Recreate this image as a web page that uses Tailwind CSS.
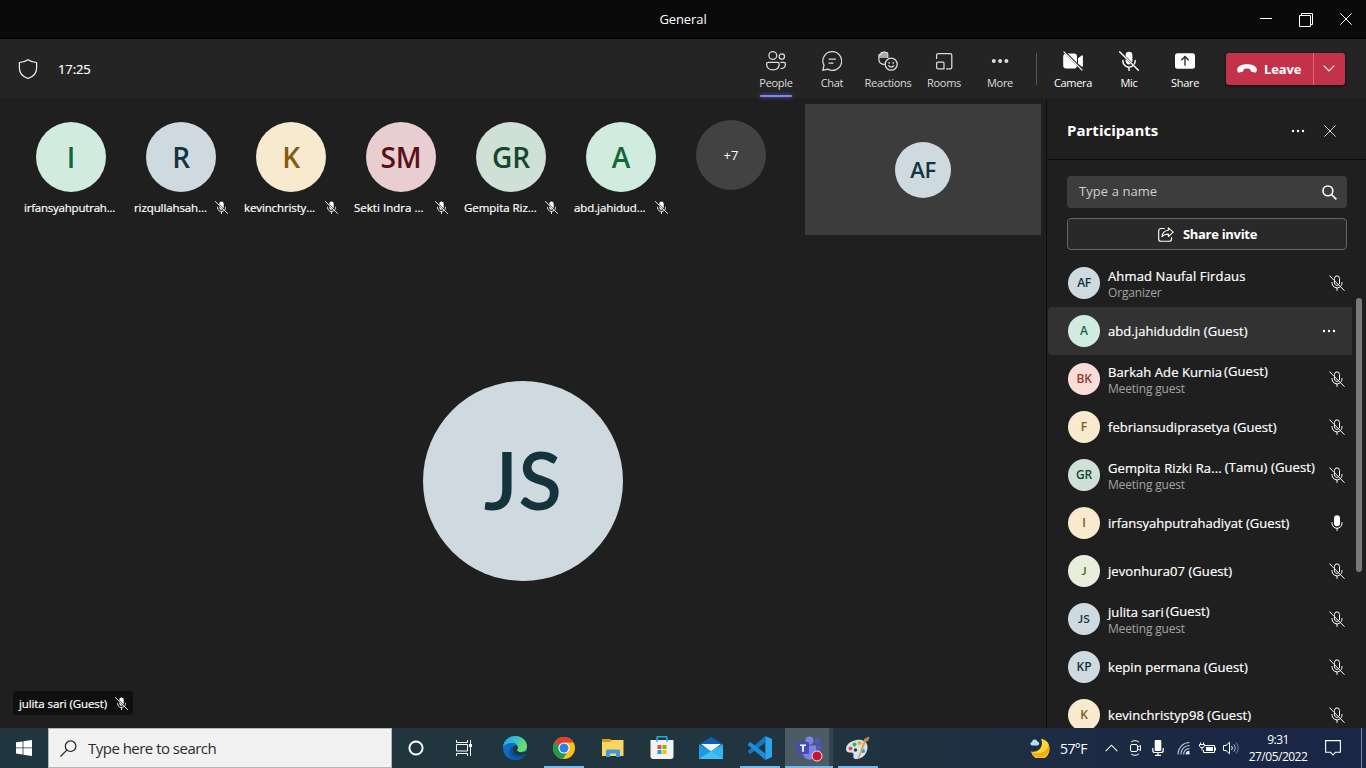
<!DOCTYPE html>
<html lang="en">
<head>
<meta charset="utf-8">
<title>General</title>
<script src="https://cdn.jsdelivr.net/npm/@tailwindcss/browser@4"></script>
</head>
<body class="w-[1366px] h-[768px] overflow-hidden bg-[#1f1f1f] text-white font-['Open_Sans','Noto_Sans',sans-serif]">
<svg class="hidden">
  <symbol id="mic-off" viewBox="0 0 16 16">
    <g fill="none" stroke="currentColor" stroke-linecap="round">
      <path d="M5.5 4.3v-.9a2.5 2.5 0 0 1 5 0v5.1M5.5 5.8v2.1a2.5 2.5 0 0 0 3.900 2.1"/>
      <path d="M3 7.5v.6a5 5 0 0 0 8 3.9M12.3 10.5a5 5 0 0 0 .7-2.4v-.6M8 13v2.4"/>
      <path d="M.6.8l14.6 14.6"/>
    </g>
  </symbol>
  <symbol id="mic-off-fill" viewBox="0 0 20 20">
    <path d="M6.6 4.900V4.200a3.400 3.400 0 0 1 6.800 0v6l-.4 1zM6.600 8l5 5a3.400 3.400 0 0 1-5-3z" fill="currentColor"/>
    <path d="M3.900 9.500v.6a6.100 6.100 0 0 0 9.400 5.100M15.400 13a6 6 0 0 0 .7-2.900v-.6M10 16.400v3.100M.6.8l18.800 18.400" fill="none" stroke="currentColor" stroke-width="1.4" stroke-linecap="round"/>
  </symbol>
  <symbol id="dots" viewBox="0 0 14 4">
    <circle cx="2" cy="2" r="1.2"/><circle cx="7" cy="2" r="1.2"/><circle cx="12" cy="2" r="1.2"/>
  </symbol>
</svg>

<div class="flex flex-col h-full">
  <!-- Title bar -->
  <header class="h-[39px] shrink-0 bg-[#0a0a0a] border-b border-black grid grid-cols-[1fr_auto_1fr] items-center">
    <span></span>
    <span class="text-[13px] tracking-[-0.1px] pt-0.5">General</span>
    <div class="flex justify-end pt-px">
      <div class="w-10 flex justify-center"><svg width="12" height="12" viewBox="0 0 12 12"><path d="M0 5.5h12" stroke="#fff"/></svg></div>
      <div class="w-10 flex justify-center"><svg width="14" height="14" viewBox="0 0 14 14" fill="none" stroke="#fff"><path d="M.5 2.5h11v11h-11zM2.5 2.5v-2h11v11h-2"/></svg></div>
      <div class="w-10 flex justify-center"><svg width="12" height="12" viewBox="0 0 12 12"><path d="M.3.3l11.4 11.4M11.7.3L.3 11.7" stroke="#fff"/></svg></div>
    </div>
  </header>

  <!-- Meeting toolbar -->
  <nav class="h-[60px] shrink-0 bg-[#242424] border-b border-[#1f1f1f] flex items-center pl-[18px] pr-[21px]">
    <svg width="20" height="20" viewBox="0 0 20 20" fill="none" stroke="#f0f0f0" stroke-width="1.2" stroke-linejoin="round"><path d="M10 .7c2.6 1.9 5.3 2.6 8.6 2.8v5.8c0 5-3 8.300-8.600 10.200C4.400 17.600 1.400 14.300 1.400 9.300V3.500C4.700 3.300 7.400 2.600 10 .7z"/></svg>
    <span class="ml-5 pt-0.5 text-[13px] tracking-[-0.1px] w-24 [-webkit-text-stroke:0.2px]">17:25</span>
    <div class="ml-auto flex h-full text-[11px] leading-4 text-[#dcdcdc] tracking-[-0.3px]">
      <div class="w-14 flex flex-col items-center pt-3">
        <svg width="20" height="20" viewBox="0 0 20 20" fill="none" stroke="currentColor" stroke-width="1.25"><circle cx="6.800" cy="4.500" r="3.900"/><circle cx="15.800" cy="5.600" r="2.700"/><path d="M2.300 11.400h9.200c1 0 1.700.7 1.700 1.600 0 3.600-2.400 5.900-6.300 5.900S.6 16.600.6 13c0-.9.700-1.600 1.700-1.600zM14.400 11.400h3.300c1 0 1.700.7 1.700 1.600 0 2.900-1.700 4.700-4.800 4.500"/></svg>
        <span class="mt-1">People</span>
        <i class="mt-1 w-8 h-0.5 rounded bg-[#7f85f5] shadow-[0_0_4px_#5b5fc7]"></i>
      </div>
      <div class="w-14 flex flex-col items-center pt-3">
        <svg width="20" height="20" viewBox="0 0 20 20" fill="none" stroke="currentColor" stroke-width="1.25" stroke-linecap="round" stroke-linejoin="round"><path d="M10.300.7a9.300 9.300 0 1 1-4.500 17.400L.8 19.300l1.200-4.900A9.300 9.300 0 0 1 10.300.7zM7 8h6.500M7 12h4"/></svg>
        <span class="mt-1">Chat</span>
      </div>
      <div class="w-14 flex flex-col items-center pt-3">
        <svg width="20" height="20" viewBox="0 0 20 20"><path d="M1 9V4.300c0-1.500 2-1.500 2-.2V2.500C3 1 5 1 5.200 2c.2-1.800 2.400-1.500 2.400.2.300-1 2.200-.8 2.200.7V7H1z" fill="#a8a8a8"/><path d="M6.900 13.600C3.300 13.300.9 11.600.9 8.500V4.300c0-1.300 1.900-1.300 2-.1V2.500c0-1.400 2-1.400 2.200-.3C5.300.4 7.300.4 7.500 2.200c.3-1.100 2.300-.9 2.300.6V7" fill="none" stroke="currentColor" stroke-width="1.200"/><circle cx="13.200" cy="13.200" r="6" fill="#242424" stroke="currentColor" stroke-width="1.300"/><circle cx="11.200" cy="11.800" r=".9" fill="currentColor"/><circle cx="15.200" cy="11.800" r=".9" fill="currentColor"/><path d="M10.600 14.700c1.300 1.800 4 1.800 5.300 0" fill="none" stroke="currentColor" stroke-width="1.200" stroke-linecap="round"/></svg>
        <span class="mt-1">Reactions</span>
      </div>
      <div class="w-14 flex flex-col items-center pt-3">
        <svg width="20" height="20" viewBox="0 0 20 20" fill="none" stroke="currentColor" stroke-width="1.250"><path d="M2.600 8V4.200c0-.9.700-1.600 1.600-1.600h12c.9 0 1.600.7 1.600 1.600v12c0 .9-.7 1.600-1.600 1.600H12M2.600 12.200c0-.7.500-1.200 1.200-1.200h5c.7 0 1.200.5 1.200 1.200v5.600H4.200c-.9 0-1.600-.7-1.600-1.600z"/></svg>
        <span class="mt-1">Rooms</span>
      </div>
      <div class="w-14 flex flex-col items-center pt-3">
        <svg width="20" height="20" viewBox="0 0 20 20" fill="currentColor"><circle cx="3.800" cy="10" r="2"/><circle cx="10.100" cy="10" r="2"/><circle cx="16.400" cy="10" r="2"/></svg>
        <span class="mt-1">More</span>
      </div>
      <i class="w-px h-8 bg-[#575757] ml-2 mr-2 mt-[14px]"></i>
      <div class="w-14 flex flex-col items-center pt-3 text-white">
        <svg width="20" height="20" viewBox="0 0 20 20"><path d="M4.500 2.500H11A3 3 0 0 1 14 5.500V12zM.2 5.500c0-1.300.7-2.200 1.700-2.700L14 15c-.3 1.500-1.400 2.600-3 2.600H3.200a3 3 0 0 1-3-3zM15 7.300l3.700-2.900c.6-.4 1.200-.1 1.200.6v10c0 .7-.6 1-1.200.6L15 12.700z" fill="#fff"/><path d="M1.400.2l18.400 18.400" stroke="#242424" stroke-width="1.200"/><path d="M.6.6l18.800 18.800" stroke="#fff" stroke-width="1.200"/></svg>
        <span class="mt-1">Camera</span>
      </div>
      <div class="w-14 flex flex-col items-center pt-3 text-white">
        <svg width="20" height="20"><use href="#mic-off-fill"/></svg>
        <span class="mt-1">Mic</span>
      </div>
      <div class="w-14 flex flex-col items-center pt-3 text-white">
        <svg width="20" height="20" viewBox="0 0 20 20"><rect y="2.200" width="20" height="15.600" rx="2.500" fill="#fff"/><path d="M10 14.800V6M6.300 9.200L10 5.500l3.700 3.700" fill="none" stroke="#242424" stroke-width="1.300"/></svg>
        <span class="mt-1">Share</span>
      </div>
    </div>
    <div class="ml-[13px] w-[119px] h-8 rounded-[3px] bg-[#c4314b] flex shadow-[0_1px_3px_#000a]">
      <div class="w-[87px] flex items-center pl-[11px]">
        <svg width="20" height="9" viewBox="0 0 20 9"><path d="M10 .3c4.500 0 8.200 1.500 9.500 3.900.6 1.200.3 2.500-.1 3.500-.3.700-.9 1-1.600.8l-3.200-.7c-.6-.2-1-.6-1.100-1.200l-.3-1.700c-2.100-.7-4.300-.7-6.400 0l-.3 1.700c-.1.600-.5 1-1.100 1.200l-3.200.7c-.7.200-1.300-.1-1.600-.8-.4-1-.7-2.300-.1-3.500C1.800 1.800 5.500.3 10 .3z" fill="#fff"/></svg>
        <span class="ml-[7px] pt-0.5 font-bold text-[13px] tracking-[-0.1px]">Leave</span>
      </div>
      <div class="flex-1 border-l border-[#e2677c] flex items-center pl-[9px]"><svg width="12" height="7" viewBox="0 0 12 7"><path d="M.7.7L6 6 11.300.7" fill="none" stroke="#fff" stroke-width="1.100"/></svg></div>
    </div>
  </nav>

  <div class="flex flex-1 min-h-0">
    <!-- Stage -->
    <main class="w-[1046px] flex flex-col">
      <div class="flex h-[137px] pl-4 pt-[5px]">
        <div class="flex text-[11.5px] tracking-[-0.18px] leading-4">
          <div class="w-[110px] pt-[18px] flex flex-col items-center">
            <div class="size-[70px] rounded-full bg-[#d1ecdf] text-[#15653b] text-[28px] font-semibold flex items-center justify-center">I</div>
            <div class="w-[94px] mt-2 flex items-center justify-between"><span class="[-webkit-text-stroke:0.2px] tracking-[-0.22px]">irfansyahputrah...</span></div>
          </div>
          <div class="w-[110px] pt-[18px] flex flex-col items-center">
            <div class="size-[70px] rounded-full bg-[#cfdae0] text-[#14333c] text-[28px] font-semibold flex items-center justify-center">R</div>
            <div class="w-[94px] mt-2 flex items-center justify-between"><span class="[-webkit-text-stroke:0.2px] tracking-[-0.1px]">rizqullahsah...</span><svg class="mb-0.5" width="13" height="13"><use href="#mic-off-fill"/></svg></div>
          </div>
          <div class="w-[110px] pt-[18px] flex flex-col items-center">
            <div class="size-[70px] rounded-full bg-[#f8eace] text-[#835b12] text-[28px] font-semibold flex items-center justify-center">K</div>
            <div class="w-[94px] mt-2 flex items-center justify-between"><span class="[-webkit-text-stroke:0.2px] tracking-[-0.12px]">kevinchristy...</span><svg class="mb-0.5" width="13" height="13"><use href="#mic-off-fill"/></svg></div>
          </div>
          <div class="w-[110px] pt-[18px] flex flex-col items-center">
            <div class="size-[70px] rounded-full bg-[#e8ced1] text-[#591017] text-[28px] font-semibold flex items-center justify-center">SM</div>
            <div class="w-[94px] mt-2 flex items-center justify-between"><span class="[-webkit-text-stroke:0.2px] tracking-[0.02px]">Sekti Indra ...</span><svg class="mb-0.5" width="13" height="13"><use href="#mic-off-fill"/></svg></div>
          </div>
          <div class="w-[110px] pt-[18px] flex flex-col items-center">
            <div class="size-[70px] rounded-full bg-[#cfe0d6] text-[#15472c] text-[28px] font-semibold flex items-center justify-center">GR</div>
            <div class="w-[94px] mt-2 flex items-center justify-between"><span class="[-webkit-text-stroke:0.2px] tracking-[-0.04px]">Gempita Riz...</span><svg class="mb-0.5" width="13" height="13"><use href="#mic-off-fill"/></svg></div>
          </div>
          <div class="w-[110px] pt-[18px] flex flex-col items-center">
            <div class="size-[70px] rounded-full bg-[#d1ecdf] text-[#15653b] text-[28px] font-semibold flex items-center justify-center">A</div>
            <div class="w-[94px] mt-2 flex items-center justify-between"><span class="[-webkit-text-stroke:0.2px] tracking-[-0.1px]">abd.jahidud...</span><svg class="mb-0.5" width="13" height="13"><use href="#mic-off-fill"/></svg></div>
          </div>
          <div class="w-[110px] pt-4 flex flex-col items-center">
            <div class="size-[70px] rounded-full bg-[#424242] text-[13px] tracking-normal flex items-center justify-center">+7</div>
          </div>
        </div>
        <div class="ml-[19px] w-[236px] h-[131px] bg-[#3c3c3c] flex items-center justify-center">
          <div class="size-14 rounded-full bg-[#cfdae0] text-[#14333c] text-[22px] tracking-[-0.5px] font-semibold flex items-center justify-center">AF</div>
        </div>
      </div>
      <div class="flex-1 flex flex-col items-center pt-[145px]">
        <div class="size-[200px] rounded-full bg-[#cfdae0] text-[#14333c] font-['Lato',sans-serif] text-[80px] tracking-[0.5px] pb-1 font-semibold flex items-center justify-center">JS</div>
        <div class="self-start ml-[13px] mt-auto mb-[13px] w-[120px] h-6 rounded bg-[#0f0f0f] flex items-center justify-between pl-1.5 pr-[5px] text-[11.5px] tracking-[-0.1px]"><span class="pt-0.5 [-webkit-text-stroke:0.2px]">julita sari (Guest)</span><svg width="13" height="13"><use href="#mic-off-fill"/></svg></div>
      </div>
    </main>

    <!-- Participants panel -->
    <aside class="w-[320px] border-l border-[#0d0d0d] flex flex-col">
      <div class="h-[61px] shrink-0 border-b border-[#0d0d0d] flex items-center pl-5 pr-[30px] pt-[3px]">
        <span class="font-bold text-[15px] tracking-[0.02px]">Participants</span>
        <svg class="ml-auto" width="14" height="4" fill="#fff"><use href="#dots"/></svg>
        <svg class="ml-[19px]" width="12" height="12" viewBox="0 0 12 12"><path d="M.4.4l11.200 11.200M11.600.4L.4 11.600" stroke="#d0d0d0"/></svg>
      </div>
      <div class="mt-4 ml-5 w-[280px] h-8 shrink-0 rounded bg-[#3d3d3d] flex items-center pl-3 pr-[10px] text-[13px] text-[#d0d0d0]">
        <span class="flex-1 tracking-[0.07px]">Type a name</span>
        <svg width="15" height="15" viewBox="0 0 15 15" fill="none" stroke="#fff" stroke-width="1.600"><circle cx="5.900" cy="5.900" r="4.900"/><path d="M9.500 9.500l4.900 4.900"/></svg>
      </div>
      <div class="mt-[10px] ml-5 w-[280px] h-8 shrink-0 rounded border border-[#666] bg-[#292929] flex items-center justify-center gap-[9px] text-[13px] font-bold">
        <svg class="ml-px" width="16" height="15" viewBox="0 0 16 15" fill="none" stroke="#fff" stroke-width="1.100" stroke-linecap="round" stroke-linejoin="round"><path d="M6.500 1.500H3A2.300 2.300 0 0 0 .7 3.800v8.200A2.300 2.300 0 0 0 3 14.300h8.200a2.300 2.300 0 0 0 2.300-2.300v-1.500"/><path d="M10.300.8l4.900 4.300-4.900 4.400V7.100C7.600 7 5.600 7.700 3.900 9.700 4.400 5.900 6.600 3.600 10.300 3.200z"/></svg>
        <span class="pt-px tracking-[-0.3px]">Share invite</span>
      </div>
      <div class="mt-[9px] flex-1 min-h-0 flex text-[13px] tracking-[0.07px] leading-4">
        <div class="ml-px w-[304px] overflow-hidden">
          <div class="h-12 flex items-center pl-5 pr-[7px]">
            <div class="size-8 rounded-full bg-[#cfdae0] text-[#14333c] text-xs tracking-[-0.3px] font-semibold flex items-center justify-center">AF</div>
            <div class="ml-2 flex-1 pt-0.5"><div class="tracking-[0.14px] [-webkit-text-stroke:0.2px]">Ahmad Naufal Firdaus</div><div class="text-xs text-[#a3a3a3] mt-px tracking-[-0.17px]">Organizer</div></div>
            <svg width="16" height="16"><use href="#mic-off"/></svg>
          </div>
          <div class="h-12 flex items-center pl-5 pr-4 bg-[#323232] rounded-l">
            <div class="size-8 rounded-full bg-[#d1ecdf] text-[#15653b] text-xs font-semibold flex items-center justify-center">A</div>
            <div class="ml-2 flex-1 [-webkit-text-stroke:0.2px]">abd.jahiduddin (Guest)</div>
            <svg width="14" height="4" fill="#fff"><use href="#dots"/></svg>
          </div>
          <div class="h-12 flex items-center pl-5 pr-[7px]">
            <div class="size-8 rounded-full bg-[#fbddd8] text-[#943b30] text-xs tracking-[-0.3px] font-semibold flex items-center justify-center">BK</div>
            <div class="ml-2 flex-1 pt-0.5"><div class="flex gap-0.5 [-webkit-text-stroke:0.2px]"><span>Barkah Ade Kurnia</span><span class="-mt-px">(Guest)</span></div><div class="text-xs text-[#a3a3a3] mt-px tracking-[-0.17px]">Meeting guest</div></div>
            <svg width="16" height="16"><use href="#mic-off"/></svg>
          </div>
          <div class="h-12 flex items-center pl-5 pr-[7px]">
            <div class="size-8 rounded-full bg-[#f8eace] text-[#835b12] text-xs font-semibold flex items-center justify-center">F</div>
            <div class="ml-2 flex-1 tracking-[0.03px] [-webkit-text-stroke:0.2px]">febriansudiprasetya (Guest)</div>
            <svg width="16" height="16"><use href="#mic-off"/></svg>
          </div>
          <div class="h-12 flex items-center pl-5 pr-[7px]">
            <div class="size-8 rounded-full bg-[#cfe0d6] text-[#15472c] text-xs tracking-[-0.3px] font-semibold flex items-center justify-center">GR</div>
            <div class="ml-2 flex-1 pt-0.5"><div class="flex gap-[3px] whitespace-nowrap tracking-[0.11px] [-webkit-text-stroke:0.2px]"><span>Gempita Rizki Ra...</span><span class="-mt-px">(Tamu) (Guest)</span></div><div class="text-xs text-[#a3a3a3] mt-px tracking-[-0.17px]">Meeting guest</div></div>
            <svg width="16" height="16"><use href="#mic-off"/></svg>
          </div>
          <div class="h-12 flex items-center pl-5 pr-[7px]">
            <div class="size-8 rounded-full bg-[#f8eace] text-[#835b12] text-xs font-semibold flex items-center justify-center">I</div>
            <div class="ml-2 flex-1 tracking-[0.03px] [-webkit-text-stroke:0.2px]">irfansyahputrahadiyat (Guest)</div>
            <svg width="16" height="16" viewBox="0 0 16 16"><rect x="5" y=".3" width="6" height="11" rx="3" fill="#fff"/><path d="M3 7.500v.8a5 5 0 0 0 10 0v-.8M8 13.300v2.200" fill="none" stroke="#fff" stroke-linecap="round"/></svg>
          </div>
          <div class="h-12 flex items-center pl-5 pr-[7px]">
            <div class="size-8 rounded-full bg-[#e7eedb] text-[#4c6b22] font-['Lato',sans-serif] text-xs font-semibold flex items-center justify-center">J</div>
            <div class="ml-2 flex-1 [-webkit-text-stroke:0.2px]">jevonhura07 (Guest)</div>
            <svg width="16" height="16"><use href="#mic-off"/></svg>
          </div>
          <div class="h-12 flex items-center pl-5 pr-[7px]">
            <div class="size-8 rounded-full bg-[#cfdae0] text-[#14333c] font-['Lato',sans-serif] text-xs font-semibold flex items-center justify-center">JS</div>
            <div class="ml-2 flex-1 pt-0.5"><div class="flex gap-0.5 [-webkit-text-stroke:0.2px]"><span>julita sari</span><span class="-mt-px">(Guest)</span></div><div class="text-xs text-[#a3a3a3] mt-px tracking-[-0.17px]">Meeting guest</div></div>
            <svg width="16" height="16"><use href="#mic-off"/></svg>
          </div>
          <div class="h-12 flex items-center pl-5 pr-[7px]">
            <div class="size-8 rounded-full bg-[#cfdae0] text-[#14333c] text-xs font-semibold flex items-center justify-center">KP</div>
            <div class="ml-2 flex-1 [-webkit-text-stroke:0.2px]">kepin permana (Guest)</div>
            <svg width="16" height="16"><use href="#mic-off"/></svg>
          </div>
          <div class="h-12 flex items-center pl-5 pr-[7px]">
            <div class="size-8 rounded-full bg-[#f8eace] text-[#835b12] text-xs font-semibold flex items-center justify-center">K</div>
            <div class="ml-2 flex-1 [-webkit-text-stroke:0.2px]">kevinchristyp98 (Guest)</div>
            <svg width="16" height="16"><use href="#mic-off"/></svg>
          </div>
        </div>
        <i class="ml-1 mt-[39px] w-1.5 h-[274px] rounded-full bg-[#797979]"></i>
      </div>
    </aside>
  </div>

  <!-- Taskbar -->
  <footer class="h-10 shrink-0 flex bg-linear-to-r from-[#21373f] via-[#21343f] via-60% to-[#1a2645] to-90%">
    <div class="w-12 flex items-center justify-center"><svg width="16" height="16" viewBox="0 0 16 16" fill="#fff"><path d="M0 2.300l6.600-.9v6.100H0zM7.400 1.300L16 0v7.500H7.400zM0 8.300h6.600v6.200L0 13.600zM7.400 8.300H16V16l-8.600-1.300z"/></svg></div>
    <div class="w-[344px] bg-[#f2f2f2] border border-[#b5b5b5] flex items-center pl-[11px] text-[15px] text-[#2b2b2b]">
      <svg width="17" height="17" viewBox="0 0 17 17" fill="none" stroke="#222" stroke-width="1.200"><circle cx="10.600" cy="6.200" r="5.300"/><path d="M6.800 10.200L.5 16.500"/></svg>
      <span class="ml-[11px] tracking-[-0.52px]">Type here to search</span>
    </div>
    <div class="w-12 flex items-center justify-center"><svg width="16" height="16" viewBox="0 0 16 16"><circle cx="8" cy="8" r="6.600" fill="none" stroke="#fff" stroke-width="2"/></svg></div>
    <div class="w-12 flex items-center justify-center"><svg width="16" height="16" viewBox="0 0 16 16" fill="none" stroke="#fff"><path d="M.5 0v2.500h11V0M.5 16v-2.500h11V16M.5 4.500h11v6.500H.5zM14.500 0v4M14.500 7v9"/><path d="M13 4h3v3h-3z" fill="#fff" stroke="none"/></svg></div>
    <div class="ml-[3px] flex gap-px">
      <div class="w-12 flex items-center justify-center">
        <svg width="24" height="24" viewBox="0 0 24 24"><defs><linearGradient id="eg" x1="0" y1="0" x2="1" y2=".5"><stop offset="0" stop-color="#1c9fe8"/><stop offset=".5" stop-color="#35c1d0"/><stop offset="1" stop-color="#6fe05a"/></linearGradient></defs><circle cx="12" cy="12" r="12" fill="#0f6cc4"/><path d="M0 11C.6 4.600 5.700 0 12 0c6.900 0 12 4.700 12 10.300 0 3.500-2.700 5.700-6 5.700-2.400 0-4-.9-4-1.800 0-.6.900-1 .9-2.700 0-2.600-2.400-4.700-5.900-4.700C4.800 6.800 1.400 8.700 0 11z" fill="url(#eg)"/><path d="M9 10.500c-1.900 1.500-2.400 4-1.400 6.300 1.600 3.600 5.700 5.600 9.900 4.800 1.500-.3 2.900-1 4.100-2.200.5-.6 0-1.200-.7-.9-5 2-10.800.1-11.900-4.300-.3-1.300-.2-2.500 0-3.700z" fill="#0b4a92"/><path d="M9.500 11.500c-.6 3.400 1 6.200 4.300 7.200 3 .9 5.600.6 8-.7 1-.5 1.400.3.900 1.100-.5.800-1.200 1.600-1.800 2.200l5-1V15l-4 1c-4 1-7.800 0-7.900-1.900 0-.6 1-1.200.9-2.700-.2-2.500-4.600-2.900-5.400.1z" fill="#21373f"/><path d="M7.500 13c-.5 4.500 2.300 8.500 7.500 8.900 2.600.2 4.800-.3 6.200-1.600C19 22.900 15.600 24 12 24c-4 0-6.500-4-6.500-7 0-1.500.8-3 2-4z" fill="#0e59aa"/></svg>
      </div>
      <div class="w-12 flex flex-col items-center pt-[9px]">
        <svg width="22" height="22" viewBox="0 0 22 22"><circle cx="11" cy="11" r="11" fill="#fbc116"/><path d="M11 11L1.500 5.500A11 11 0 0 1 20.500 5.500H11z" fill="#e33b2e"/><path d="M1.500 5.500A11 11 0 0 0 10 21.950L15.300 13.500 11 11z" fill="#229a4c"/><circle cx="11" cy="11" r="5.600" fill="#fff"/><circle cx="11" cy="11" r="4.500" fill="#2f7de9"/></svg>
        <i class="mt-auto w-10 h-0.5 bg-[#76b9ed]"></i>
      </div>
      <div class="w-12 flex items-center justify-center">
        <svg width="22" height="18" viewBox="0 0 22 18"><path d="M1 1h20.500v16H0V1z" fill="#fcd462"/><path d="M0 0h8.500l1 1.500L8.500 3H0z" fill="#dd9c0b"/><path d="M4 18v-6c0-1 .6-1.500 1.500-1.500h11c.9 0 1.500.5 1.500 1.500v6h-4v-3.500H8V18z" fill="#3c98dc"/></svg>
      </div>
      <div class="w-12 flex items-center justify-center">
        <svg width="24" height="24" viewBox="0 0 24 24"><path d="M7 5V1.800C7 1 7.500.6 8.200.6h7.600c.7 0 1.200.4 1.200 1.200V5" fill="none" stroke="#29a7e6" stroke-width="1.600"/><path d="M.5 4h23v16.500c0 1.500-1 2.500-2.500 2.500H3C1.500 23 .5 22 .5 20.500z" fill="#f3f3f3"/><path d="M7 3.800v2M17 3.800v2" stroke="#29a7e6" stroke-width="1.600"/><path d="M7.500 9h4v4h-4z" fill="#f25022"/><path d="M12.500 9h4v4h-4z" fill="#7fba00"/><path d="M7.500 14h4v4h-4z" fill="#00a4ef"/><path d="M12.500 14h4v4h-4z" fill="#ffb900"/></svg>
      </div>
      <div class="w-12 flex items-center justify-center">
        <svg width="24" height="22" viewBox="0 0 24 22"><path d="M0 7.500L11 .4c.7-.5 1.300-.5 2 0l11 7.100-5 6H5z" fill="#0d60b4"/><path d="M2 7h20L12 14.500z" fill="#f4f4f4"/><path d="M0 7.500l12 6.800L24 7.500V22H0z" fill="#1c9be2"/><path d="M24 7.500V22H0l12-7.700z" fill="#43c3f3"/><path d="M12 14.300L24 22V7.500z" fill="#33b4ee"/></svg>
      </div>
      <div class="w-12 flex flex-col items-center pt-2">
        <svg width="24" height="24" viewBox="0 0 24 24"><path d="M17.300 0L24 3v18l-6.700 3z" fill="#2aa4ec"/><path d="M17.300 0v6.500L2.300 18 .2 16.200c-.4-.4-.4-1 0-1.400z" fill="#1379c4"/><path d="M17.300 24v-6.500L2.300 6 .2 7.800c-.4.400-.4 1 0 1.400z" fill="#1b8ddb"/></svg>
        <i class="mt-auto w-10 h-0.5 bg-[#76b9ed]"></i>
      </div>
      <div class="w-12 flex flex-col items-center bg-linear-to-r from-[#4c5c67] from-92% to-[#33444f] to-92% pt-2">
        <div class="relative">
          <svg width="24" height="24" viewBox="0 0 24 24"><circle cx="20.300" cy="5.300" r="2.700" fill="#5059c9"/><path d="M16 9.500h7c.6 0 1 .4 1 1V17c0 2.500-1.500 4-4 4h-4z" fill="#5059c9"/><circle cx="12.500" cy="4.500" r="4" fill="#7b83eb"/><path d="M7 9.500h11c.6 0 1 .4 1 1V17c0 4-2.500 6.500-6.300 6.500S6 21 6 17z" fill="#7b83eb"/><rect y="6" width="12" height="12" rx="1.200" fill="#454bb8"/><path d="M3 8.500h6v1.600H6.900v5.700H5.100v-5.700H3z" fill="#fff"/></svg>
          <svg class="absolute left-[14px] top-[14px]" width="12" height="12" viewBox="0 0 12 12"><circle cx="6" cy="6" r="5" fill="#cf1030" stroke="#f3dfe0" stroke-width="1"/></svg>
        </div>
        <i class="mt-auto w-12 h-0.5 bg-[#76b9ed]"></i>
      </div>
      <div class="w-12 flex flex-col items-center pt-2">
        <svg width="24" height="24" viewBox="0 0 24 24"><path d="M10.500 4C16 3 21.500 5.500 21.500 11c0 6.500-5 12-11 12-3 0-3.500-1.800-3-3.800.3-1.700-.5-2.700-2.500-2.700-2.500 0-5-.5-5-3.500C0 8 5 5 10.500 4z" fill="#d3e4f1"/><circle cx="4.500" cy="12.500" r="2" fill="#e8503c"/><circle cx="8.500" cy="8.500" r="2" fill="#4aa93f"/><circle cx="13.500" cy="7" r="2" fill="#f5a623"/><circle cx="9.500" cy="14" r="1.700" fill="#23414d"/><circle cx="17" cy="15" r="2" fill="#3b95dd"/><path d="M18.500 3.500l1.800 1.200L13 22.500l-1.800 1z" fill="#f0963a"/><path d="M18 4.500c0-2.500 2-2.500 5-4 1 2-.5 5-3.500 5.500z" fill="#b98358"/></svg>
        <i class="mt-auto w-10 h-0.5 bg-[#76b9ed]"></i>
      </div>
    </div>
    <!-- Tray -->
    <div class="ml-auto flex items-center">
      <svg width="20" height="20" viewBox="0 0 20 20"><path d="M11 .8C17 2 19.500 6 19.300 10A9.300 9.300 0 0 1 1 13.500C7.500 15 14.500 9.500 11 .8z" fill="#ffd52e"/><path d="M18.800 7A9.300 9.300 0 0 1 1 13.500c6 4 15 2 17.800-6.500z" fill="#f5a91b"/><path d="M2.300 7.500C0 7.500-.2 4.300 2 4c.3-3 4.500-3.300 5.200-.6C9.500 3.300 10 7 7.500 7.500z" fill="#b6dcf8"/></svg>
      <span class="ml-2.5 w-[30px] text-sm tracking-[-0.6px] pt-px">57°F</span>
      <svg class="ml-[15px]" width="13" height="8" viewBox="0 0 13 8" fill="none" stroke="#fff" stroke-width="1.100"><path d="M.7 7.200l5.800-6 5.800 6"/></svg>
      <svg class="ml-[11px]" width="13" height="16" viewBox="0 0 13 16" fill="none" stroke="#fff"><rect x="1.500" y="4.500" width="7" height="7" rx="1.500"/><path d="M8.500 7.200l3-1.700v5l-3-1.700M2 2.200C4.200.2 7.800.2 10 2.200M2 13.800c2.200 2 5.800 2 8 0"/></svg>
      <svg class="ml-[10px]" width="12" height="16" viewBox="0 0 12 16"><rect x="2.700" width="6.600" height="11" rx="1" fill="#fff"/><path d="M.8 8v2.500c0 1.200.8 2 2 2h6.400c1.200 0 2-.8 2-2V8M6 12.500V15M3 15.300h6" fill="none" stroke="#fff" stroke-width="1.200"/></svg>
      <svg class="ml-[13px]" width="13" height="14" viewBox="0 0 13 14" fill="none" stroke="#c6ccd6" stroke-width="1.100"><path d="M1 13.500C1 7 6 1.500 12.500 1.500M3.800 13.500c0-5 3.700-9 8.700-9M6.600 13.500c0-3.500 2.600-6 5.900-6"/><path d="M9.200 13.500c0-2 1.500-3.300 3.300-3.300" stroke="#fff"/><circle cx="11.300" cy="12.200" r="1.300" fill="#fff" stroke="none"/></svg>
      <svg class="ml-[9px]" width="17" height="13" viewBox="0 0 17 13" fill="none" stroke="#fff"><path d="M6 3.500h9.500v7H4.500V8M16.500 5.500v3"/><path d="M7 5h7v4H7z" fill="#fff" stroke="none"/><path d="M1.500.5v2M4.500.5v2M.5 2.500h5v1.800L4 5.500H2L.5 4.300zM3 5.500v3"/></svg>
      <svg class="ml-[7px]" width="17" height="14" viewBox="0 0 17 14" fill="none" stroke="#fff"><path d="M.5 4.500H3L6.500 1.200v11.600L3 9.500H.5z"/><path d="M8.500 5c1 1.200 1 2.800 0 4"/><path d="M10.800 3.300c1.900 2.200 1.900 5.200 0 7.400" stroke="#b5bbc7"/><path d="M13 1.500c2.800 3.200 2.800 7.800 0 11" stroke="#7e8798"/></svg>
      <div class="ml-2 w-[60px] text-center text-xs leading-[17px] tracking-[-0.5px] whitespace-nowrap"><div>9:31</div><div>27/05/2022</div></div>
      <svg class="ml-[17px]" width="16" height="16" viewBox="0 0 16 16" fill="none" stroke="#fff" stroke-width="1.100"><path d="M.6.6h14.800v11.700h-5L8 15l-2.400-2.700h-5z"/></svg>
      <i class="ml-5 mr-1 w-px h-10 bg-[#7c8496]"></i>
    </div>
  </footer>
</div>
</body>
</html>
